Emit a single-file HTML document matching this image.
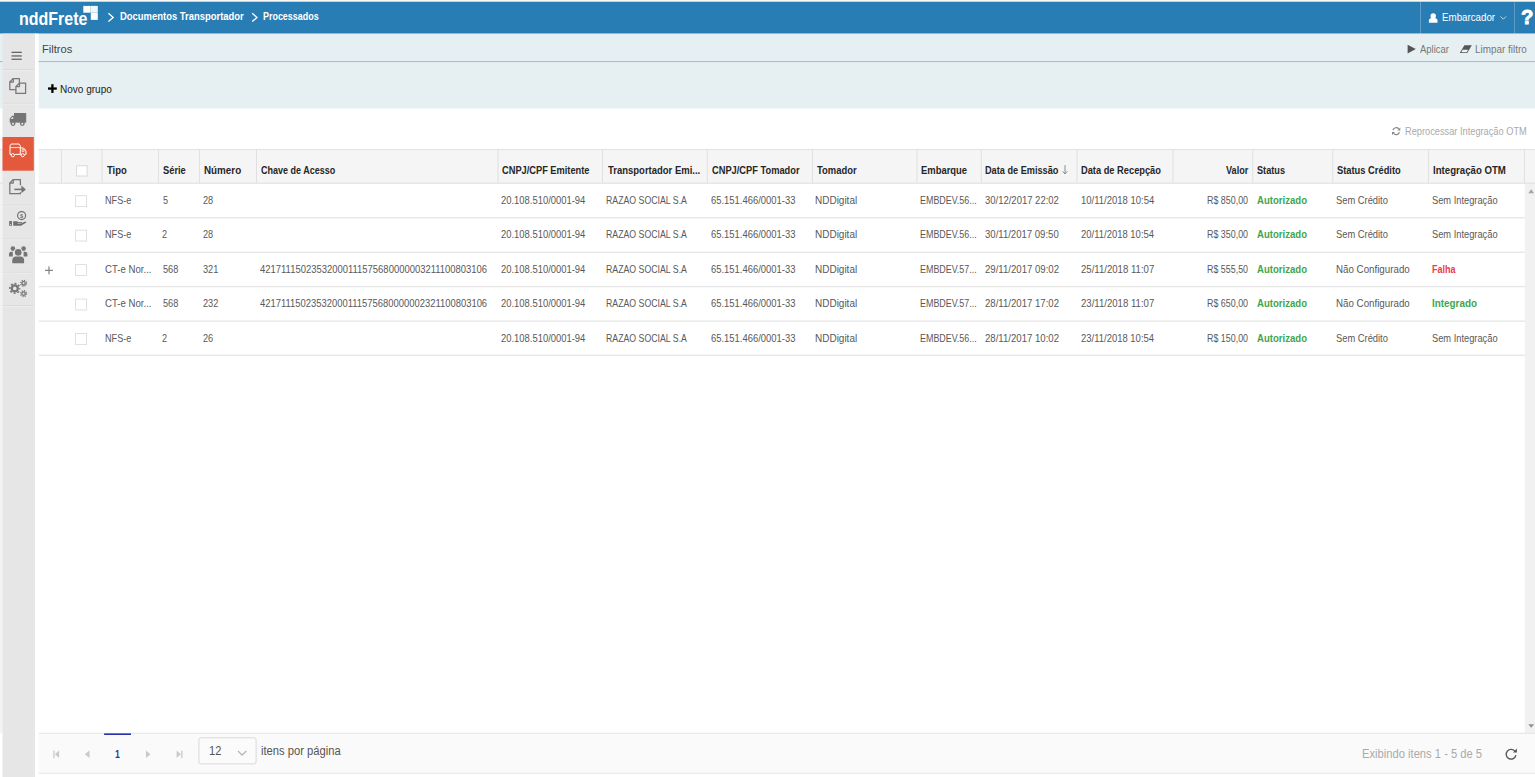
<!DOCTYPE html>
<html lang="pt-BR">
<head>
<meta charset="utf-8">
<title>nddFrete - Documentos Transportador - Processados</title>
<style>
html,body{margin:0;padding:0}
body{width:1535px;height:777px;position:relative;overflow:hidden;background:#fff;font-family:"Liberation Sans",sans-serif}
.t{position:absolute;white-space:nowrap;line-height:20px;transform-origin:0 0}
.ov{position:absolute;left:0;top:0}
</style>
</head>
<body>
<svg class="ov" width="1535" height="777" viewBox="0 0 1535 777">
<defs><linearGradient id="sh" x1="0" x2="1" y1="0" y2="0"><stop offset="0" stop-color="#d8d8d8"/><stop offset="1" stop-color="#fff"/></linearGradient></defs>
<!-- page backgrounds -->
<rect x="0" y="0" width="1535" height="1.8" fill="#fcf8f4"/>
<rect x="0" y="1.7" width="1535" height="32" fill="#297db5"/>
<rect x="0" y="33.7" width="1535" height="74.8" fill="#e6f0f3"/>
<rect x="0" y="61" width="1535" height="1.1" fill="#b4bcc0"/>
<rect x="0" y="149.2" width="1535" height="34.2" fill="#f5f5f5"/>
<rect x="1524.8" y="183.5" width="10.2" height="549.7" fill="#f1f1f1"/>
<rect x="38.5" y="733.2" width="1496.5" height="40" fill="#fafafa"/>
<rect x="198.9" y="737.8" width="57.2" height="26.1" rx="2" fill="#fbfbfb" stroke="#d9d9d9" stroke-width="1"/>
<rect x="0" y="183.5" width="2.6" height="549.5" fill="#f3f3f3"/>
<rect x="0" y="149.2" width="1535" height="0.9" fill="#dcdcdc"/>
<rect x="0" y="182.7" width="1535" height="0.9" fill="#dadada"/>
<rect x="60.95" y="150" width="0.9" height="32.8" fill="#dedede"/>
<rect x="101.55" y="150" width="0.9" height="32.8" fill="#dedede"/>
<rect x="157.95" y="150" width="0.9" height="32.8" fill="#dedede"/>
<rect x="198.95" y="150" width="0.9" height="32.8" fill="#dedede"/>
<rect x="256.05" y="150" width="0.9" height="32.8" fill="#dedede"/>
<rect x="497.55" y="150" width="0.9" height="32.8" fill="#dedede"/>
<rect x="602.05" y="150" width="0.9" height="32.8" fill="#dedede"/>
<rect x="706.85" y="150" width="0.9" height="32.8" fill="#dedede"/>
<rect x="811.95" y="150" width="0.9" height="32.8" fill="#dedede"/>
<rect x="916.45" y="150" width="0.9" height="32.8" fill="#dedede"/>
<rect x="980.85" y="150" width="0.9" height="32.8" fill="#dedede"/>
<rect x="1076.65" y="150" width="0.9" height="32.8" fill="#dedede"/>
<rect x="1172.55" y="150" width="0.9" height="32.8" fill="#dedede"/>
<rect x="1252.35" y="150" width="0.9" height="32.8" fill="#dedede"/>
<rect x="1332.35" y="150" width="0.9" height="32.8" fill="#dedede"/>
<rect x="1428.15" y="150" width="0.9" height="32.8" fill="#dedede"/>
<rect x="1523.95" y="150" width="0.9" height="32.8" fill="#dedede"/>
<rect x="38.5" y="217.15" width="1486.3" height="1.3" fill="#e6e6e6"/>
<rect x="38.5" y="251.60" width="1486.3" height="1.3" fill="#e6e6e6"/>
<rect x="38.5" y="285.95" width="1486.3" height="1.3" fill="#e6e6e6"/>
<rect x="38.5" y="320.50" width="1486.3" height="1.3" fill="#e6e6e6"/>
<rect x="38.5" y="354.65" width="1486.3" height="1.3" fill="#e6e6e6"/>
<rect x="38.5" y="732.8" width="1496.5" height="0.9" fill="#e2e2e2"/>
<rect x="38.5" y="772.8" width="1496.5" height="0.9" fill="#e2e2e2"/>
<rect x="76.6" y="165.8" width="10.5" height="10.2" fill="#fff" stroke="#d6d6d6" stroke-width="0.9"/>
<rect x="75.6" y="195.70" width="11" height="10.9" fill="#fff" stroke="#dcdcdc" stroke-width="0.9"/>
<rect x="75.6" y="230.15" width="11" height="10.9" fill="#fff" stroke="#dcdcdc" stroke-width="0.9"/>
<rect x="75.6" y="264.60" width="11" height="10.9" fill="#fff" stroke="#dcdcdc" stroke-width="0.9"/>
<rect x="75.6" y="299.05" width="11" height="10.9" fill="#fff" stroke="#dcdcdc" stroke-width="0.9"/>
<rect x="75.6" y="333.50" width="11" height="10.9" fill="#fff" stroke="#dcdcdc" stroke-width="0.9"/>
<!-- sidebar -->
<rect x="2.5" y="33.7" width="31.4" height="743.3" fill="#e6e6e6"/>
<rect x="33.9" y="33.7" width="4.7" height="743.3" fill="#fff"/>
<rect x="33.9" y="33.7" width="1.7" height="743.3" fill="url(#sh)"/>
<rect x="2.5" y="137" width="31.3" height="33.7" fill="#e4583c"/>
<!-- header: logo squares -->
<rect x="83.3" y="5.9" width="7.1" height="6.8" fill="#fdfefe"/>
<rect x="90.4" y="5.9" width="7.4" height="6.8" fill="#f1f7fb"/>
<rect x="90.8" y="12.7" width="7" height="7.2" fill="#fbfdfe"/>
<!-- breadcrumb chevrons -->
<polyline points="108.4,13.2 113.2,17.4 108.4,21.6" fill="none" stroke="#fff" stroke-width="1.3"/>
<polyline points="252.2,13.2 257,17.4 252.2,21.6" fill="none" stroke="#fff" stroke-width="1.3"/>
<!-- header separators -->
<rect x="1420" y="1.7" width="0.9" height="32" fill="#fff" opacity=".27"/>
<rect x="1514.1" y="1.7" width="0.9" height="32" fill="#fff" opacity=".27"/>
<!-- user icon -->
<circle cx="1433.2" cy="15.9" r="2.7" fill="#fff"/>
<path d="M1428.9,22.8 v-2.2 c0,-1.6 1.5,-2.6 2.6,-2.6 h3.4 c1.1,0 2.6,1 2.6,2.6 v2.2 z" fill="#fff"/>
<polyline points="1500.5,16.4 1503.3,19.2 1506.1,16.4" fill="none" stroke="#fff" stroke-width="0.9" opacity=".75"/>
<!-- filter icons -->
<polygon points="1407.6,44.8 1415.8,49.1 1407.6,53.4" fill="#555"/>
<polygon points="1464.4,45.2 1471.8,45.2 1467.2,53.1 1459.8,53.1" fill="#555"/>
<polygon points="1462.7,49.8 1468.1,49.8 1466.7,52.3 1461.3,52.3" fill="#eef5f7"/>
<!-- plus Novo grupo -->
<rect x="48" y="87.4" width="8.8" height="2.3" fill="#000"/>
<rect x="51.25" y="84.2" width="2.3" height="8.7" fill="#000"/>
<!-- reprocessar refresh icon -->
<g fill="none" stroke="#868686" stroke-width="1.2">
<path d="M1392.9,130.2 a3.4,3.4 0 0 1 5.9,-1.3"/>
<path d="M1399.4,132.1 a3.4,3.4 0 0 1 -5.9,1.3"/>
</g>
<polygon points="1397.3,130.4 1400.3,127.4 1400.3,130.4" fill="#868686"/>
<polygon points="1395,131.9 1392,134.9 1392,131.9" fill="#868686"/>
<!-- sort arrow -->
<g stroke="#8c8c8c" stroke-width="1" fill="none">
<line x1="1065" y1="165.2" x2="1065" y2="173.8"/>
<polyline points="1062.7,171.3 1065,174 1067.3,171.3"/>
</g>
<!-- expand plus row 3 -->
<rect x="45" y="269.75" width="7.9" height="1.25" fill="#858585"/>
<rect x="48.35" y="266.4" width="1.25" height="7.9" fill="#858585"/>
<!-- scroll arrows -->
<polygon points="1528.3,193.2 1531.2,189.3 1534.1,193.2" fill="#a5a5a5"/>
<polygon points="1528.3,724.2 1531.2,727.8 1534.1,724.2" fill="#8f8f8f"/>
<!-- pager icons -->
<g fill="#c9c9c9">
<rect x="53.3" y="750.6" width="1.3" height="7.5"/>
<polygon points="59.1,750.6 59.1,758.1 55,754.35"/>
<polygon points="89.5,750.6 89.5,758.1 84.8,754.35"/>
<polygon points="146,750.6 146,758.1 150.4,754.35"/>
<polygon points="176.6,750.6 176.6,758.1 180.8,754.35"/>
<rect x="181.2" y="750.6" width="1.3" height="7.5"/>
</g>
<rect x="104.1" y="733.4" width="26.9" height="1.6" fill="#2531a8"/>
<polyline points="238,751 242.1,755.2 246.3,751" fill="none" stroke="#b5b5b5" stroke-width="1.3"/>
<!-- pager refresh -->
<path d="M1515.2,751.6 A4.9,4.9 0 1 0 1515.9,755.2" fill="none" stroke="#555" stroke-width="1.3"/>
<polygon points="1513,752.6 1516.9,752.6 1516.9,748.4" fill="#555"/>
<!-- sidebar separators -->
<g fill="#d6d6d6">
<rect x="2.5" y="69.2" width="31.3" height="0.8"/><rect x="2.5" y="102.9" width="31.3" height="0.8"/>
<rect x="2.5" y="204.8" width="31.3" height="0.8"/><rect x="2.5" y="238.6" width="31.3" height="0.8"/>
<rect x="2.5" y="271.9" width="31.3" height="0.8"/><rect x="2.5" y="305.3" width="31.3" height="0.8"/>
</g>
<g fill="#efefef">
<rect x="2.5" y="70" width="31.3" height="0.8"/><rect x="2.5" y="103.7" width="31.3" height="0.8"/>
<rect x="2.5" y="205.6" width="31.3" height="0.8"/><rect x="2.5" y="239.4" width="31.3" height="0.8"/>
<rect x="2.5" y="272.7" width="31.3" height="0.8"/><rect x="2.5" y="306.1" width="31.3" height="0.8"/>
</g>
<!-- hamburger -->
<g fill="#666"><rect x="11.5" y="51.7" width="10.3" height="1.3"/><rect x="11.5" y="55.3" width="10.3" height="1.3"/><rect x="11.5" y="58.6" width="10.3" height="1.3"/></g>
<!-- files icon -->
<g fill="none" stroke="#777" stroke-width="1.25" stroke-linejoin="round">
<path d="M15.6,89.5 H9.8 V82 L13.3,78.5 H19.4 V82.8"/>
<path d="M13.3,78.5 V82 H9.8"/>
<path d="M19.5,83 H25.6 V93.4 H15.9 V86.6 Z"/>
<path d="M19.5,83 V86.6 H15.9"/>
</g>
<!-- truck filled -->
<g fill="#757575">
<rect x="14" y="113" width="12.2" height="9.6"/>
<path d="M14.2,115.7 H12 L9.7,118.8 V122.6 H14.2 Z"/>
<circle cx="13" cy="123.5" r="2.45"/><circle cx="22.3" cy="123.5" r="2.45"/>
</g>
<circle cx="13" cy="123.7" r="1.05" fill="#e6e6e6"/><circle cx="22.3" cy="123.7" r="1.05" fill="#e6e6e6"/>
<polygon points="12.2,116.9 13.2,116.9 13.2,118.9 10.8,118.9" fill="#dcdcdc"/>
<!-- selected truck outline -->
<g fill="none" stroke="#fff" stroke-width="1">
<path d="M10,154.4 V145.8 L11.2,144 H19 L20.3,145.8 V154.4"/>
<path d="M20.3,148 H23.6 L26,151 V154.4 H24.6"/>
<path d="M10,154.4 H11 M14.6,154.4 H20.6"/>
<circle cx="12.8" cy="155.2" r="1.6"/><circle cx="22.7" cy="155.2" r="1.6"/>
<path d="M10,147.6 H20.3" stroke-width="0.8"/>
<path d="M22,149.6 H24 V151.6 H22 Z" stroke-width="0.7"/>
</g>
<!-- export icon -->
<g fill="none" stroke="#757575" stroke-width="1.25" stroke-linejoin="round">
<path d="M20.4,185.2 V179.6 H13.2 L9.8,183 V193.7 H20.4 V192.2"/>
<path d="M13.2,179.6 V183 H9.8"/>
</g>
<rect x="14.4" y="188.6" width="7.6" height="1.6" fill="#757575"/>
<polygon points="21.4,185.6 25.9,189.4 21.4,193.2" fill="#757575"/>
<!-- hand coin -->
<circle cx="21.6" cy="215.6" r="4" fill="none" stroke="#707070" stroke-width="1.15"/>
<text x="21.6" y="217.7" font-size="5.6" font-family="Liberation Sans, sans-serif" font-weight="bold" text-anchor="middle" fill="#707070" style="text-rendering:geometricPrecision">$</text>
<rect x="9.2" y="221" width="2.7" height="4.8" fill="#707070"/>
<rect x="10" y="224" width="0.9" height="0.9" fill="#e6e6e6"/>
<path d="M13.2,221.3 H16.8 L18.6,222 H21.9 V223.1 L25.3,221.4 L26.4,222.4 L21,225.8 H13.2 Z" fill="#707070"/>
<path d="M17.5,223.3 H21.5" stroke="#e6e6e6" stroke-width="0.6"/>
<!-- users -->
<g fill="#757575">
<circle cx="12.9" cy="248.6" r="2.3"/><circle cx="23.6" cy="248.6" r="2.3"/>
<path d="M9,256.4 v-2.4 c0,-1.3 1,-2.2 2.2,-2.2 h1.6 v4.6 z"/>
<path d="M27.4,256.4 v-2.4 c0,-1.3 -1,-2.2 -2.2,-2.2 h-1.6 v4.6 z"/>
</g>
<circle cx="18.2" cy="252.4" r="4.3" fill="#e6e6e6"/>
<g fill="#757575">
<circle cx="18.2" cy="252.4" r="3.3"/>
<path d="M12.3,263 v-3.2 c0,-2 1.6,-3.4 3.4,-3.4 h5 c1.8,0 3.4,1.4 3.4,3.4 v3.2 c0,0 -0.3,0.3 -0.8,0.3 h-10.2 c-0.5,0 -0.8,-0.3 -0.8,-0.3 z"/>
</g>
<!-- gears -->
<g fill="none" stroke="#757575">
<circle cx="14.8" cy="288.4" r="3" stroke-width="2.3"/>
<circle cx="14.8" cy="288.4" r="4.9" stroke-width="1.6" stroke-dasharray="1.9 1.95" stroke-dashoffset="0.9"/>
<circle cx="23.6" cy="283.3" r="1.7" stroke-width="1.3"/>
<circle cx="23.6" cy="283.3" r="2.9" stroke-width="1.3" stroke-dasharray="1.14 1.14"/>
<circle cx="23.6" cy="293.6" r="1.7" stroke-width="1.3"/>
<circle cx="23.6" cy="293.6" r="2.9" stroke-width="1.3" stroke-dasharray="1.14 1.14"/>
</g>

</svg>
<header id="topbar">
<span class="t" style="left:18.80px;top:9px;font-size:18.31px;color:#fff;transform:scaleX(0.8730);font-weight:bold">nddFrete</span>
<span class="t" style="left:119.91px;top:7px;font-size:10.47px;color:#fff;transform:scaleX(0.9016);font-weight:bold">Documentos Transportador</span>
<span class="t" style="left:262.94px;top:7px;font-size:10.47px;color:#fff;transform:scaleX(0.8537);font-weight:bold">Processados</span>
<span class="t" style="left:1442.34px;top:7px;font-size:10.61px;color:#fff;transform:scaleX(0.9190)">Embarcador</span>
<span class="t" style="left:1521.36px;top:7px;font-size:20.93px;color:#fff;transform:scaleX(0.9713);font-weight:bold;-webkit-text-stroke:0.9px #fff">?</span>
</header>
<section id="filtros">
<span class="t" style="left:42.23px;top:39px;font-size:11.63px;color:#444;transform:scaleX(0.9578)">Filtros</span>
<span class="t" style="left:59.82px;top:79px;font-size:10.61px;color:#222;transform:scaleX(0.9441)">Novo grupo</span>
<span class="t" style="left:1419.60px;top:40px;font-size:10.17px;color:#777;transform:scaleX(0.9340)">Aplicar</span>
<span class="t" style="left:1474.63px;top:40px;font-size:10.17px;color:#777;transform:scaleX(0.9742)">Limpar filtro</span>
<span class="t" style="left:1405.08px;top:122px;font-size:10.32px;color:#aaa;transform:scaleX(0.8964)">Reprocessar Integração OTM</span>
</section>
<div id="grid" role="grid">
<div class="gh" role="row">
<span class="t" style="left:106.75px;top:160px;font-size:11.19px;color:#262626;transform:scaleX(0.8460);font-weight:bold">Tipo</span>
<span class="t" style="left:162.85px;top:160px;font-size:11.19px;color:#262626;transform:scaleX(0.8319);font-weight:bold">Série</span>
<span class="t" style="left:203.88px;top:160px;font-size:11.19px;color:#262626;transform:scaleX(0.8794);font-weight:bold">Número</span>
<span class="t" style="left:260.72px;top:160px;font-size:11.19px;color:#262626;transform:scaleX(0.8046);font-weight:bold">Chave de Acesso</span>
<span class="t" style="left:502.21px;top:160px;font-size:11.19px;color:#262626;transform:scaleX(0.8278);font-weight:bold">CNPJ/CPF Emitente</span>
<span class="t" style="left:607.50px;top:160px;font-size:11.19px;color:#262626;transform:scaleX(0.8477);font-weight:bold">Transportador Emi...</span>
<span class="t" style="left:711.71px;top:160px;font-size:11.19px;color:#262626;transform:scaleX(0.8305);font-weight:bold">CNPJ/CPF Tomador</span>
<span class="t" style="left:817.20px;top:160px;font-size:11.19px;color:#262626;transform:scaleX(0.8424);font-weight:bold">Tomador</span>
<span class="t" style="left:921.11px;top:160px;font-size:11.19px;color:#262626;transform:scaleX(0.8428);font-weight:bold">Embarque</span>
<span class="t" style="left:985.23px;top:160px;font-size:11.19px;color:#262626;transform:scaleX(0.8191);font-weight:bold">Data de Emissão</span>
<span class="t" style="left:1081.12px;top:160px;font-size:11.19px;color:#262626;transform:scaleX(0.8296);font-weight:bold">Data de Recepção</span>
<span class="t" style="left:1225.80px;top:160px;font-size:11.19px;color:#262626;transform:scaleX(0.8157);font-weight:bold">Valor</span>
<span class="t" style="left:1257.36px;top:160px;font-size:11.19px;color:#262626;transform:scaleX(0.8190);font-weight:bold">Status</span>
<span class="t" style="left:1337.05px;top:160px;font-size:11.19px;color:#262626;transform:scaleX(0.8335);font-weight:bold">Status Crédito</span>
<span class="t" style="left:1432.90px;top:160px;font-size:11.19px;color:#262626;transform:scaleX(0.8620);font-weight:bold">Integração OTM</span>
</div>
<div class="gr" role="row">
<span class="t" style="left:105.29px;top:191px;font-size:10.17px;color:#595959;transform:scaleX(0.8958)">NFS-e</span>
<span class="t" style="left:162.61px;top:191px;font-size:10.17px;color:#595959;transform:scaleX(0.9050)">5</span>
<span class="t" style="left:203.17px;top:191px;font-size:10.17px;color:#595959;transform:scaleX(0.9050)">28</span>
<span class="t" style="left:501.26px;top:191px;font-size:10.17px;color:#595959;transform:scaleX(0.9274)">20.108.510/0001-94</span>
<span class="t" style="left:606.01px;top:191px;font-size:10.17px;color:#595959;transform:scaleX(0.8625)">RAZAO SOCIAL S.A</span>
<span class="t" style="left:710.86px;top:191px;font-size:10.17px;color:#595959;transform:scaleX(0.9280)">65.151.466/0001-33</span>
<span class="t" style="left:815.42px;top:191px;font-size:10.17px;color:#595959;transform:scaleX(0.9831)">NDDigital</span>
<span class="t" style="left:920.30px;top:191px;font-size:10.17px;color:#595959;transform:scaleX(0.8786)">EMBDEV.56...</span>
<span class="t" style="left:984.70px;top:191px;font-size:10.17px;color:#595959;transform:scaleX(0.9340)">30/12/2017 22:02</span>
<span class="t" style="left:1081.11px;top:191px;font-size:10.17px;color:#595959;transform:scaleX(0.9347)">10/11/2018 10:54</span>
<span class="t" style="left:1207.10px;top:191px;font-size:10.17px;color:#595959;transform:scaleX(0.8757)">R$ 850,00</span>
<span class="t" style="left:1256.55px;top:191px;font-size:10.17px;color:#3fa64b;transform:scaleX(0.9423);font-weight:bold">Autorizado</span>
<span class="t" style="left:1336.41px;top:191px;font-size:10.17px;color:#595959;transform:scaleX(0.9191)">Sem Crédito</span>
<span class="t" style="left:1432.41px;top:191px;font-size:10.17px;color:#595959;transform:scaleX(0.9142)">Sem Integração</span>
</div>
<div class="gr" role="row">
<span class="t" style="left:105.29px;top:225px;font-size:10.17px;color:#595959;transform:scaleX(0.8958)">NFS-e</span>
<span class="t" style="left:162.47px;top:225px;font-size:10.17px;color:#595959;transform:scaleX(0.9050)">2</span>
<span class="t" style="left:203.17px;top:225px;font-size:10.17px;color:#595959;transform:scaleX(0.9050)">28</span>
<span class="t" style="left:501.26px;top:225px;font-size:10.17px;color:#595959;transform:scaleX(0.9274)">20.108.510/0001-94</span>
<span class="t" style="left:606.01px;top:225px;font-size:10.17px;color:#595959;transform:scaleX(0.8625)">RAZAO SOCIAL S.A</span>
<span class="t" style="left:710.86px;top:225px;font-size:10.17px;color:#595959;transform:scaleX(0.9280)">65.151.466/0001-33</span>
<span class="t" style="left:815.42px;top:225px;font-size:10.17px;color:#595959;transform:scaleX(0.9831)">NDDigital</span>
<span class="t" style="left:920.30px;top:225px;font-size:10.17px;color:#595959;transform:scaleX(0.8786)">EMBDEV.56...</span>
<span class="t" style="left:984.70px;top:225px;font-size:10.17px;color:#595959;transform:scaleX(0.9412)">30/11/2017 09:50</span>
<span class="t" style="left:1081.26px;top:225px;font-size:10.17px;color:#595959;transform:scaleX(0.9328)">20/11/2018 10:54</span>
<span class="t" style="left:1207.10px;top:225px;font-size:10.17px;color:#595959;transform:scaleX(0.8757)">R$ 350,00</span>
<span class="t" style="left:1256.55px;top:225px;font-size:10.17px;color:#3fa64b;transform:scaleX(0.9423);font-weight:bold">Autorizado</span>
<span class="t" style="left:1336.41px;top:225px;font-size:10.17px;color:#595959;transform:scaleX(0.9191)">Sem Crédito</span>
<span class="t" style="left:1432.41px;top:225px;font-size:10.17px;color:#595959;transform:scaleX(0.9142)">Sem Integração</span>
</div>
<div class="gr" role="row">
<span class="t" style="left:105.30px;top:260px;font-size:10.17px;color:#595959;transform:scaleX(0.9468)">CT-e Nor...</span>
<span class="t" style="left:162.61px;top:260px;font-size:10.17px;color:#595959;transform:scaleX(0.9050)">568</span>
<span class="t" style="left:203.31px;top:260px;font-size:10.17px;color:#595959;transform:scaleX(0.9050)">321</span>
<span class="t" style="left:259.85px;top:260px;font-size:10.17px;color:#595959;transform:scaleX(0.9308)">42171115023532000111575680000003211100803106</span>
<span class="t" style="left:501.26px;top:260px;font-size:10.17px;color:#595959;transform:scaleX(0.9274)">20.108.510/0001-94</span>
<span class="t" style="left:606.01px;top:260px;font-size:10.17px;color:#595959;transform:scaleX(0.8625)">RAZAO SOCIAL S.A</span>
<span class="t" style="left:710.86px;top:260px;font-size:10.17px;color:#595959;transform:scaleX(0.9280)">65.151.466/0001-33</span>
<span class="t" style="left:815.42px;top:260px;font-size:10.17px;color:#595959;transform:scaleX(0.9831)">NDDigital</span>
<span class="t" style="left:920.30px;top:260px;font-size:10.17px;color:#595959;transform:scaleX(0.8786)">EMBDEV.57...</span>
<span class="t" style="left:984.55px;top:260px;font-size:10.17px;color:#595959;transform:scaleX(0.9450)">29/11/2017 09:02</span>
<span class="t" style="left:1081.25px;top:260px;font-size:10.17px;color:#595959;transform:scaleX(0.9439)">25/11/2018 11:07</span>
<span class="t" style="left:1207.10px;top:260px;font-size:10.17px;color:#595959;transform:scaleX(0.8757)">R$ 555,50</span>
<span class="t" style="left:1256.55px;top:260px;font-size:10.17px;color:#3fa64b;transform:scaleX(0.9423);font-weight:bold">Autorizado</span>
<span class="t" style="left:1336.04px;top:260px;font-size:10.17px;color:#595959;transform:scaleX(0.9602)">Não Configurado</span>
<span class="t" style="left:1432.14px;top:260px;font-size:10.17px;color:#ee3a4c;transform:scaleX(0.8845);font-weight:bold">Falha</span>
</div>
<div class="gr" role="row">
<span class="t" style="left:105.30px;top:294px;font-size:10.17px;color:#595959;transform:scaleX(0.9468)">CT-e Nor...</span>
<span class="t" style="left:162.61px;top:294px;font-size:10.17px;color:#595959;transform:scaleX(0.9050)">568</span>
<span class="t" style="left:203.17px;top:294px;font-size:10.17px;color:#595959;transform:scaleX(0.9050)">232</span>
<span class="t" style="left:259.85px;top:294px;font-size:10.17px;color:#595959;transform:scaleX(0.9279)">42171115023532000111575680000002321100803106</span>
<span class="t" style="left:501.26px;top:294px;font-size:10.17px;color:#595959;transform:scaleX(0.9274)">20.108.510/0001-94</span>
<span class="t" style="left:606.01px;top:294px;font-size:10.17px;color:#595959;transform:scaleX(0.8625)">RAZAO SOCIAL S.A</span>
<span class="t" style="left:710.86px;top:294px;font-size:10.17px;color:#595959;transform:scaleX(0.9280)">65.151.466/0001-33</span>
<span class="t" style="left:815.42px;top:294px;font-size:10.17px;color:#595959;transform:scaleX(0.9831)">NDDigital</span>
<span class="t" style="left:920.30px;top:294px;font-size:10.17px;color:#595959;transform:scaleX(0.8786)">EMBDEV.57...</span>
<span class="t" style="left:984.55px;top:294px;font-size:10.17px;color:#595959;transform:scaleX(0.9450)">28/11/2017 17:02</span>
<span class="t" style="left:1081.25px;top:294px;font-size:10.17px;color:#595959;transform:scaleX(0.9439)">23/11/2018 11:07</span>
<span class="t" style="left:1207.10px;top:294px;font-size:10.17px;color:#595959;transform:scaleX(0.8757)">R$ 650,00</span>
<span class="t" style="left:1256.55px;top:294px;font-size:10.17px;color:#3fa64b;transform:scaleX(0.9423);font-weight:bold">Autorizado</span>
<span class="t" style="left:1336.04px;top:294px;font-size:10.17px;color:#595959;transform:scaleX(0.9602)">Não Configurado</span>
<span class="t" style="left:1432.08px;top:294px;font-size:10.17px;color:#3fa64b;transform:scaleX(0.9717);font-weight:bold">Integrado</span>
</div>
<div class="gr" role="row">
<span class="t" style="left:105.29px;top:329px;font-size:10.17px;color:#595959;transform:scaleX(0.8958)">NFS-e</span>
<span class="t" style="left:162.47px;top:329px;font-size:10.17px;color:#595959;transform:scaleX(0.9050)">2</span>
<span class="t" style="left:203.17px;top:329px;font-size:10.17px;color:#595959;transform:scaleX(0.9050)">26</span>
<span class="t" style="left:501.26px;top:329px;font-size:10.17px;color:#595959;transform:scaleX(0.9274)">20.108.510/0001-94</span>
<span class="t" style="left:606.01px;top:329px;font-size:10.17px;color:#595959;transform:scaleX(0.8625)">RAZAO SOCIAL S.A</span>
<span class="t" style="left:710.86px;top:329px;font-size:10.17px;color:#595959;transform:scaleX(0.9280)">65.151.466/0001-33</span>
<span class="t" style="left:815.42px;top:329px;font-size:10.17px;color:#595959;transform:scaleX(0.9831)">NDDigital</span>
<span class="t" style="left:920.30px;top:329px;font-size:10.17px;color:#595959;transform:scaleX(0.8786)">EMBDEV.56...</span>
<span class="t" style="left:984.55px;top:329px;font-size:10.17px;color:#595959;transform:scaleX(0.9450)">28/11/2017 10:02</span>
<span class="t" style="left:1081.26px;top:329px;font-size:10.17px;color:#595959;transform:scaleX(0.9328)">23/11/2018 10:54</span>
<span class="t" style="left:1207.10px;top:329px;font-size:10.17px;color:#595959;transform:scaleX(0.8757)">R$ 150,00</span>
<span class="t" style="left:1256.55px;top:329px;font-size:10.17px;color:#3fa64b;transform:scaleX(0.9423);font-weight:bold">Autorizado</span>
<span class="t" style="left:1336.41px;top:329px;font-size:10.17px;color:#595959;transform:scaleX(0.9191)">Sem Crédito</span>
<span class="t" style="left:1432.41px;top:329px;font-size:10.17px;color:#595959;transform:scaleX(0.9142)">Sem Integração</span>
</div>
</div>
<footer id="pager-text">
<span class="t" style="left:114.85px;top:744px;font-size:11.63px;color:#2a37a8;transform:scaleX(0.7522);font-weight:bold">1</span>
<span class="t" style="left:209.11px;top:741px;font-size:12.01px;color:#555;transform:scaleX(0.9243)">12</span>
<span class="t" style="left:261.20px;top:741px;font-size:12.21px;color:#555;transform:scaleX(0.9188)">itens por página</span>
<span class="t" style="left:1361.53px;top:744px;font-size:12.65px;color:#aaa;transform:scaleX(0.8854)">Exibindo itens 1 - 5 de 5</span>
</footer>
</body>
</html>
